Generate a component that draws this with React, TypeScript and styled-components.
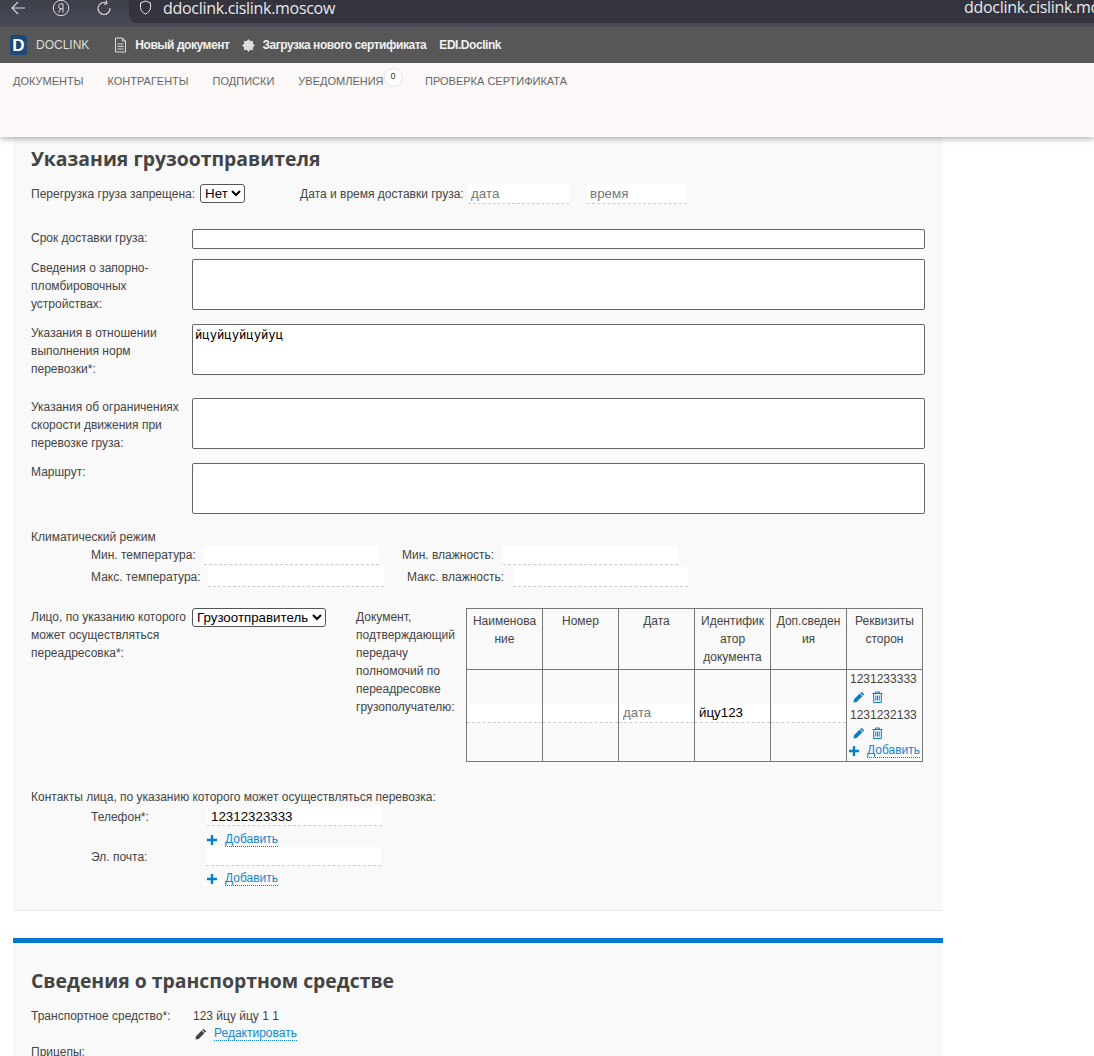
import React from "react";
import styled, { createGlobalStyle } from "styled-components";

const Global = createGlobalStyle`
  html, body { margin: 0; padding: 0; background: #fff; height: 1056px; overflow: hidden; }
  body { font-family: "Liberation Sans", Arial, sans-serif; font-size: 12px; color: #444; }
  * { box-sizing: border-box; }
`;

const Page = styled.div`height: 1056px; overflow: hidden; position: relative;`;

const Header = styled.header`
  position: relative; z-index: 2;
  box-shadow: 0 1px 7px rgba(0,0,0,.38);
`;
const BrowserBar = styled.div`
  height: 27px; background: #474955; display: flex; align-items: flex-start; overflow: hidden;
  position: relative;
`;
const BrowserButtons = styled.div`
  width: 129px; height: 23px; flex: none; display: flex; align-items: center; color: #dcdce0;
  padding: 0 0 8px 10px; gap: 26px;
  background: linear-gradient(#3d3f49, #474955);
  & > svg { flex: none; }
`;
const UrlField = styled.div`
  flex: 1; height: 23px; background: #34343e; border-bottom-left-radius: 8px;
  display: flex; align-items: center; padding: 0 0 8px 10px; gap: 11px; color: #e8e8ea;
  font-family: "Open Sans", "Noto Sans", sans-serif; font-size: 16px; letter-spacing: -.3px;
  & > svg { flex: none; }
`;
const UrlEcho = styled.span`position: absolute; left: 964px; top: -5px; color: #e8e8ea; font: 16px/24px "Open Sans", sans-serif; white-space: nowrap; letter-spacing: -.3px;`;
const DarkBar = styled.div`
  height: 36px; background: #575757; display: flex; align-items: center; padding-left: 10px;
  color: #f0f0f0; font-size: 12px; white-space: nowrap;
`;
const Logo = styled.span`
  width: 17px; height: 20px; border-radius: 3px; background: #1b4a78; color: #fff; font-weight: 700;
  font-size: 17px; line-height: 21px; text-align: center; margin-right: 9px; flex: none;
`;
const Brand = styled.span`color: #dedede; margin-right: 25px; font-size: 12px;`;
const DarkLink = styled.span<{ $gap?: number; $iconGap?: number }>`
  font-weight: 700; margin-right: ${p => p.$gap ?? 0}px; margin-left: ${p => p.$iconGap ?? 0}px;
  letter-spacing: -.46px;
`;
const Nav = styled.nav`
  height: 74px; background: #fbf8f7; display: flex; align-items: flex-start; padding: 11px 0 0 13px;
  color: #666; font-size: 11px; white-space: nowrap;
`;
const NavItem = styled.span<{ $gap: number }>`line-height: 14px; margin-top: 0; margin-right: ${p => p.$gap}px;`;
const Badge = styled.span`
  width: 19px; height: 19px; border-radius: 50%; background: #fff; border: 1px solid #e4e4e4; color: #333;
  font-size: 9px; line-height: 15px; text-align: center; margin: -6px 22.5px 0 0; flex: none;
`;

const Panel = styled.section<{ $last?: boolean; $top: number }>`
  width: 930px; margin-left: 13px; background: #f9f9f9; padding: ${p => p.$top}px 18px 0;
  ${p => p.$last ? "" : "border-bottom: 1px solid #eaeaea; height: 774px;"}
`;
const Title = styled.h2`
  margin: 0; font: 700 19.4px/28px "Open Sans", "Noto Sans", sans-serif; color: #444;
`;
const BlueBar = styled.div`width: 930px; height: 5px; margin: 27px 0 0 13px; background: #0079cc;`;
const Inline = styled.div<{ $top: number }>`
  display: flex; align-items: center; margin-top: ${p => p.$top}px; white-space: nowrap;
`;
const NativeSelect = styled.select<{ $w: number; $ml?: number }>`
  width: ${p => p.$w}px; height: 19px; font: 13.33px "Liberation Sans", Arial, sans-serif; color: #000;
  margin-left: ${p => p.$ml ?? 0}px;
  background: #fff; border: 1px solid #555; border-radius: 3px; padding: 0; flex: none;
`;
const Dashed = styled.input<{ $w?: number; $ml?: number; $pad?: number }>`
  width: ${p => p.$w ? p.$w + "px" : "100%"}; margin-left: ${p => p.$ml ?? 0}px; height: 19.5px; flex: none;
  background: #fff; border: 0; border-bottom: 1px dashed #ccc; padding: 0 0 0 ${p => p.$pad ?? 4}px; outline: none;
  font: 13.33px "Liberation Sans", Arial, sans-serif; color: #000;
  &::placeholder { color: #777; opacity: 1; }
`;
const FieldRow = styled.div<{ $top: number }>`
  display: grid; grid-template-columns: 161px 733px; margin-top: ${p => p.$top}px;
`;
const Label = styled.label`line-height: 18px; padding-top: 0; display: block;`;
const TextInput = styled.input`
  display: block; width: 733px; height: 20px; background: #fff; border: 1px solid #666; border-radius: 2px; padding: 0;
`;
const Area = styled.textarea`
  display: block; width: 733px; height: 51px; background: #fff; border: 1px solid #666; border-radius: 2px; resize: none;
  padding: 3px 2px 2px; font: 12.2px/15px "DejaVu Sans Mono", "Liberation Mono", monospace; color: #000; outline: none;
`;
const ClimateTitle = styled.div`margin-top: 14px; line-height: 18px;`;
const ClimateRow = styled.div<{ $top: number }>`
  display: flex; align-items: center; margin-top: ${p => p.$top}px; padding-left: 60px; white-space: nowrap;
`;
const TightLabel = styled.span<{ $w: number; $ml?: number }>`width: ${p => p.$w}px; margin-left: ${p => p.$ml ?? 0}px; flex: none;`;
const LowerRow = styled.div`display: flex; align-items: flex-start; margin-top: 21px;`;
const LowerLabel = styled.div`width: 161px; line-height: 18px; flex: none;`;
const DocLabel = styled.div`width: 110px; margin-left: 30px; line-height: 18px; flex: none;`;
const Table = styled.table`
  width: 457px; table-layout: fixed; border-collapse: collapse; border: 1px solid #666; flex: none; line-height: 18px;
`;
const Th = styled.th`
  border: 1px solid #777; padding: 3px 2px 3px; height: 61px; font-weight: 400; vertical-align: top; text-align: center;
  word-break: break-all; overflow-wrap: anywhere;
`;
const Td = styled.td`border: 1px solid #777; padding: 0; vertical-align: middle;`;
const CellField = styled(Dashed)`display: block; margin: 0 0 4px; height: 19px;`;
const SideCell = styled.td`border: 1px solid #777; padding: 0 0 1px 3px; vertical-align: top; line-height: 18px;`;
const IconLine = styled.div`height: 18px; display: flex; align-items: center; gap: 7px; padding-left: 3px; color: #0b7dc6;`;
const ContactsTitle = styled.div`margin-top: 26px; line-height: 18px;`;
const ContactRow = styled.div<{ $top: number }>`
  display: flex; align-items: center; height: 20px; margin-top: ${p => p.$top}px; padding-left: 60px;
`;
const ContactName = styled.span<{ $w: number }>`width: ${p => p.$w}px; flex: none;`;
const AddRow = styled.div<{ $ml: number; $top?: number; $h?: number }>`
  display: flex; align-items: center; height: ${p => p.$h ?? 18}px; margin: ${p => p.$top ?? 0}px 0 0 ${p => p.$ml}px; color: #0b7dc6; line-height: 14px;
`;
const LinkText = styled.a<{ $ml: number }>`
  margin-left: ${p => p.$ml}px; color: #1187cf; border-bottom: 1px dotted #0b7dc6; line-height: 13px; font-size: 12px;
`;
const VehicleRow = styled.div`display: grid; grid-template-columns: 162px auto; margin-top: 12px; line-height: 18px;`;
const EditRow = styled.div`display: flex; align-items: center; height: 18px; margin-left: 164px; color: #444;`;
const Trailers = styled.div`line-height: 18px;`;

const Back = () => (
  <svg width="16" height="16" viewBox="0 0 16 16" fill="none" stroke="currentColor" strokeWidth="1.1"><path d="M15 8H2M8 2 2 8l6 6" /></svg>
);
const Ya = () => (
  <svg width="18" height="18" viewBox="0 0 18 18" fill="none" stroke="currentColor"><circle cx="9" cy="9" r="7.7" strokeWidth="1" /><path d="M11 13.500V4.800H9a2.500 2.500 0 0 0 0 5h2M8.800 9.800 6.500 13.500" strokeWidth="1" /></svg>
);
const Reload = () => (
  <svg width="16" height="16" viewBox="0 0 16 16" fill="none" stroke="currentColor" strokeWidth="1.1"><path d="M10.500 3A6 6 0 1 0 14 8" /><path d="M10 .5 11 3.400 8.200 4.500" /></svg>
);
const Shield = () => (
  <svg width="13" height="15" viewBox="0 0 12 15" fill="none" stroke="currentColor" strokeWidth="1"><path d="M6 1 11 3v4.500c0 3-2.200 5.200-5 6.500C3.200 12.700 1 10.500 1 7.500V3z" /></svg>
);
const DocIcon = () => (
  <svg width="13" height="16" viewBox="0 0 13 16" fill="none" stroke="#ddd" strokeWidth="1"><path d="M1.500 1h7l3 3v11h-10zM8.500 1v3h3M3.500 7h6M3.500 9.500h6M3.500 12h6" /></svg>
);
const Burst = () => (
  <svg width="13" height="13" viewBox="0 0 13 13" fill="#ddd"><circle cx="6.500" cy="6.500" r="5" /><path d="M6.500 0 8 2H5zM6.500 13 5 11h3zM0 6.500 2 5v3zM13 6.500 11 8V5zM1.800 1.800l2.500.4-2 2zM11.200 11.200l-2.500-.4 2-2zM11.200 1.800l-.5 2.500-2-2zM1.800 11.200l.4-2.500 2 2z" /></svg>
);
const Plus = () => (
  <svg width="10" height="10" viewBox="0 0 10 10" fill="#0b7dc6"><path d="M3.800 0h2.400v3.800H10v2.400H6.200V10H3.800V6.200H0V3.800h3.800z" /></svg>
);
const Pencil = ({ color = "#0b7dc6" }: { color?: string }) => (
  <svg width="12" height="12" viewBox="0 0 12 12" fill={color}><path d="M8.500.8 11.200 3.500 10 4.700 7.300 2zM6.700 2.600 9.400 5.300 3.700 11 0.500 11.500 1 8.300z" /></svg>
);
const Trash = () => (
  <svg width="11" height="12" viewBox="0 0 11 12" fill="none" stroke="#0b7dc6" strokeWidth="1"><path d="M.5 2.500h10M3.500 2.500V1h4v1.500M1.700 2.500V11.500h7.600V2.500M3.800 4.500v5M5.500 4.500v5M7.200 4.500v5" /></svg>
);

export default function App() {
  return (
    <Page>
      <Global />
      <Header>
        <BrowserBar>
          <BrowserButtons><Back /><Ya /><Reload /></BrowserButtons>
          <UrlField><Shield />ddoclink.cislink.moscow</UrlField>
          <UrlEcho>ddoclink.cislink.moscow</UrlEcho>
        </BrowserBar>
        <DarkBar>
          <Logo>D</Logo>
          <Brand>DOCLINK</Brand>
          <DocIcon />
          <DarkLink $iconGap={8} $gap={13}>Новый документ</DarkLink>
          <Burst />
          <DarkLink $iconGap={7} $gap={13}>Загрузка нового сертификата</DarkLink>
          <DarkLink>EDI.Doclink</DarkLink>
        </DarkBar>
        <Nav>
          <NavItem $gap={24}>ДОКУМЕНТЫ</NavItem>
          <NavItem $gap={24}>КОНТРАГЕНТЫ</NavItem>
          <NavItem $gap={24}>ПОДПИСКИ</NavItem>
          <NavItem $gap={0}>УВЕДОМЛЕНИЯ</NavItem>
          <Badge>0</Badge>
          <NavItem $gap={0}>ПРОВЕРКА СЕРТИФИКАТА</NavItem>
        </Nav>
      </Header>

      <Panel $top={8}>
        <Title>Указания грузоотправителя</Title>
        <Inline $top={11}>
          <span>Перегрузка груза запрещена:</span>
          <NativeSelect $w={45} $ml={5} defaultValue="Нет"><option>Нет</option></NativeSelect>
          <TightLabel $w={164} $ml={55}>Дата и время доставки груза:</TightLabel>
          <Dashed $w={101} $ml={4} $pad={3} placeholder="дата" />
          <Dashed $w={100} $ml={18} $pad={3} placeholder="время" />
        </Inline>
        <FieldRow $top={25}>
          <Label>Срок доставки груза:</Label>
          <TextInput />
        </FieldRow>
        <FieldRow $top={10}>
          <Label>Сведения о запорно-<br />пломбировочных<br />устройствах:</Label>
          <Area />
        </FieldRow>
        <FieldRow $top={11}>
          <Label>Указания в отношении<br />выполнения норм<br />перевозки*:</Label>
          <Area defaultValue="йцуйцуйцуйуц" />
        </FieldRow>
        <FieldRow $top={20}>
          <Label>Указания об ограничениях<br />скорости движения при<br />перевозке груза:</Label>
          <Area />
        </FieldRow>
        <FieldRow $top={11}>
          <Label>Маршрут:</Label>
          <Area />
        </FieldRow>
        <ClimateTitle>Климатический режим</ClimateTitle>
        <ClimateRow $top={0}>
          <TightLabel $w={113}>Мин. температура:</TightLabel>
          <Dashed $w={175} />
          <TightLabel $w={101} $ml={23}>Мин. влажность:</TightLabel>
          <Dashed $w={175} />
        </ClimateRow>
        <ClimateRow $top={2}>
          <TightLabel $w={117}>Макс. температура:</TightLabel>
          <Dashed $w={176} />
          <TightLabel $w={106} $ml={23}>Макс. влажность:</TightLabel>
          <Dashed $w={175} />
        </ClimateRow>
        <LowerRow>
          <LowerLabel>Лицо, по указанию которого<br />может осуществляться<br />переадресовка*:</LowerLabel>
          <NativeSelect $w={134} defaultValue="Грузоотправитель"><option>Грузоотправитель</option></NativeSelect>
          <DocLabel>Документ,<br />подтверждающий<br />передачу<br />полномочий по<br />переадресовке<br />грузополучателю:</DocLabel>
          <Table>
            <thead>
              <tr>
                <Th>Наименова<br />ние</Th>
                <Th>Номер</Th>
                <Th>Дата</Th>
                <Th>Идентифик<br />атор<br />документа</Th>
                <Th>Доп.сведен<br />ия</Th>
                <Th>Реквизиты<br />сторон</Th>
              </tr>
            </thead>
            <tbody>
              <tr>
                <Td><CellField /></Td>
                <Td><CellField /></Td>
                <Td><CellField placeholder="дата" /></Td>
                <Td><CellField defaultValue="йцу123" /></Td>
                <Td><CellField /></Td>
                <SideCell>
                  <div>1231233333</div>
                  <IconLine><Pencil /><Trash /></IconLine>
                  <div>1231232133</div>
                  <IconLine><Pencil /><Trash /></IconLine>
                  <AddRow $ml={-1}><Plus /><LinkText $ml={8}>Добавить</LinkText></AddRow>
                </SideCell>
              </tr>
            </tbody>
          </Table>
        </LowerRow>
        <ContactsTitle>Контакты лица, по указанию которого может осуществляться перевозка:</ContactsTitle>
        <ContactRow $top={1}>
          <ContactName $w={116}>Телефон*:</ContactName>
          <Dashed $w={175} defaultValue="12312323333" />
        </ContactRow>
        <AddRow $ml={176} $top={6} $h={14}><Plus /><LinkText $ml={8}>Добавить</LinkText></AddRow>
        <ContactRow $top={0}>
          <ContactName $w={115}>Эл. почта:</ContactName>
          <Dashed $w={175} />
        </ContactRow>
        <AddRow $ml={176} $top={5} $h={14}><Plus /><LinkText $ml={8}>Добавить</LinkText></AddRow>
      </Panel>

      <BlueBar />
      <Panel $last $top={24}>
        <Title>Сведения о транспортном средстве</Title>
        <VehicleRow>
          <span>Транспортное средство*:</span>
          <span>123 йцу йцу 1 1</span>
        </VehicleRow>
        <EditRow><Pencil color="#444" /><LinkText $ml={7}>Редактировать</LinkText></EditRow>
        <Trailers>Прицепы:</Trailers>
      </Panel>
    </Page>
  );
}
